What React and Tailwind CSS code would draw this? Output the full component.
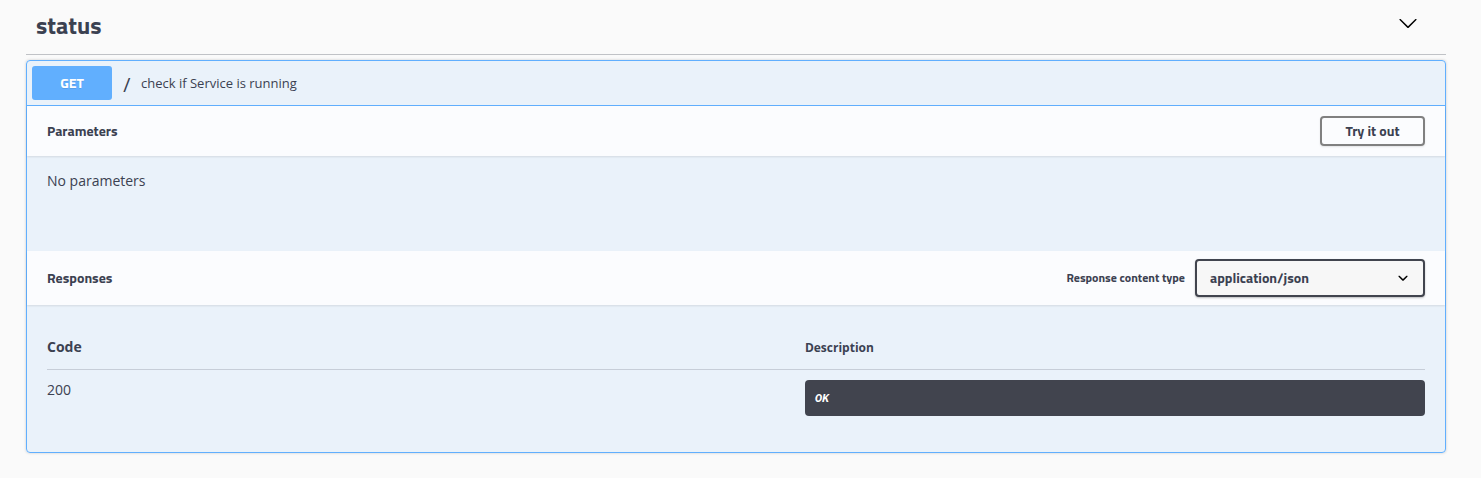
import React from "react";

const heading = "font-['Titillium_Web',Roboto,sans-serif] font-bold";

function SectionHeader({ children, className }) {
  return (
    <div
      className={`flex items-center justify-between bg-white/80 px-5 shadow-[0_1px_2px_rgba(0,0,0,0.1)] ${className}`}
    >
      {children}
    </div>
  );
}

function Operation() {
  return (
    <section className="mt-[5px] rounded border border-[#61affe] bg-[#61affe]/10 shadow-[0_0_3px_rgba(0,0,0,0.19)]">
      <div className="flex items-center border-b border-[#61affe] p-[5px]">
        <button
          type="button"
          className={`${heading} h-[34px] w-20 rounded-[3px] bg-[#61affe] text-center text-sm text-white [text-shadow:0_1px_0_rgba(0,0,0,0.1)]`}
        >
          GET
        </button>
        <span className="w-[29px] pl-2.5 font-['Source_Code_Pro','DejaVu_Sans_Mono',monospace] text-base font-semibold">/</span>
        <span className="text-[13px] leading-6">check if Service is running</span>
      </div>

      <SectionHeader className="h-[50px]">
        <h2 className={`${heading} text-sm`}>Parameters</h2>
        <button
          type="button"
          className={`${heading} h-[30px] w-[105px] rounded border-2 border-[#808080] text-sm shadow-[0_1px_2px_rgba(0,0,0,0.1)]`}
        >
          Try it out
        </button>
      </SectionHeader>
      <p className="h-[95px] px-5 pt-[15px] text-sm">No parameters</p>

      <SectionHeader className="h-[54px]">
        <h2 className={`${heading} text-sm`}>Responses</h2>
        <div className="flex items-center gap-2.5">
          <label htmlFor="content-type" className={`${heading} text-xs`}>
            Response content type
          </label>
          <div className="grid items-center">
            <select
              id="content-type"
              className={`${heading} col-start-1 row-start-1 h-[38px] w-[230px] appearance-none rounded border-2 border-[#41444e] bg-[#f7f7f7] pl-[13px] pr-10 text-sm shadow-[0_1px_2px_rgba(0,0,0,0.25)]`}
            >
              <option>application/json</option>
            </select>
            <svg
              viewBox="0 0 20 20"
              aria-hidden="true"
              className="pointer-events-none col-start-1 row-start-1 mr-3 size-5 justify-self-end"
            >
              <path
                d="M13.418 7.859c.271-.268.709-.268.978 0 .27.268.272.701 0 .969l-3.908 3.83c-.27.268-.707.268-.979 0l-3.908-3.83c-.27-.267-.27-.701 0-.969.271-.268.709-.268.978 0L10 11l3.418-3.141z"
                fill="black"
              />
            </svg>
          </div>
        </div>
      </SectionHeader>

      <div className="px-5 pb-9 pt-5">
        <table className="w-full table-fixed text-left">
          <thead>
            <tr className="border-b border-[#3b4151]/20">
              <th className="w-[55%] py-3 align-baseline text-sm font-bold">Code</th>
              <th className="w-[45%] py-3 align-baseline text-xs font-bold">Description</th>
            </tr>
          </thead>
          <tbody>
            <tr>
              <td className="pt-2.5 align-top text-sm">200</td>
              <td className="pt-2.5 align-top">
                <div className="rounded bg-[#41444e] p-2.5 font-['Source_Code_Pro','DejaVu_Sans_Mono',monospace] text-xs font-bold italic text-white">
                  OK
                </div>
              </td>
            </tr>
          </tbody>
        </table>
      </div>
    </section>
  );
}

export default function App() {
  return (
    <main className="min-h-screen bg-[#fafafa] pb-6 pl-[26px] pr-[35px] font-['Open_Sans',sans-serif] text-[#3b4151]">
      <div className="flex h-[55px] items-center justify-between border-b border-[#3b4151]/30 pb-1 pl-2.5 pr-7">
        <h1 className={`${heading} text-2xl`}>status</h1>
        <button type="button" aria-label="Collapse status">
          <svg viewBox="0 0 20 20" className="mb-1 size-5">
            <path
              d="M17.418 6.109c.272-.268.709-.268.979 0s.271.701 0 .969l-7.908 7.83c-.27.268-.707.268-.979 0l-7.908-7.83c-.27-.268-.27-.701 0-.969.271-.268.709-.268.979 0L10 13.25l7.418-7.141z"
              fill="black"
            />
          </svg>
        </button>
      </div>
      <Operation />
    </main>
  );
}
